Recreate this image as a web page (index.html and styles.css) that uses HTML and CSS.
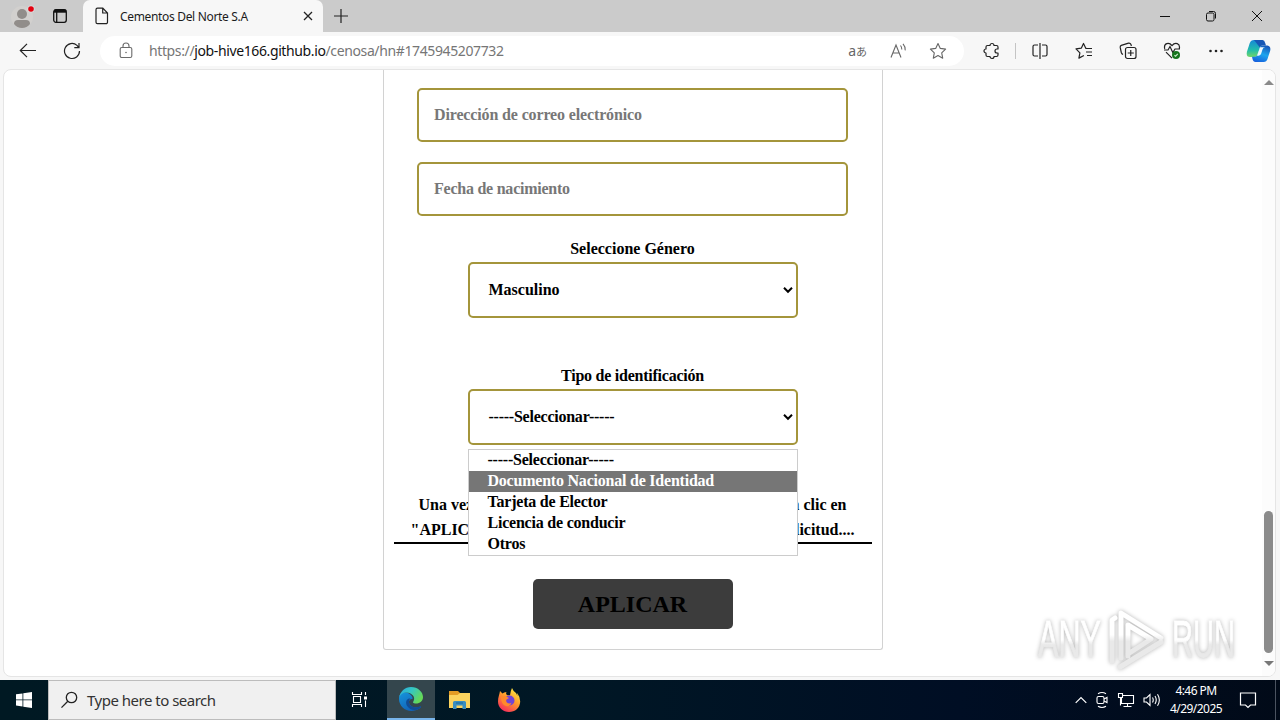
FILE: index.html
```html
<!DOCTYPE html>
<html lang="es">
<head>
<meta charset="utf-8">
<title>Cementos Del Norte S.A</title>
<link rel="stylesheet" href="styles.css">
</head>
<body>
<div class="desktop">
  <header class="tabstrip">
    <div class="strip-left">
      <svg class="profile" width="24" height="28" viewBox="0 0 24 28"><circle cx="11" cy="14" r="11" fill="#d2d0ce"/><circle cx="11" cy="11" r="5" fill="#918d8a"/><path d="M3 21q0-4 4-4h8q4 0 4 4-3 4-8 4t-8-4z" fill="#918d8a"/><circle cx="20" cy="6" r="3.600" fill="#ddd"/><circle cx="20" cy="6" r="2.800" fill="#e3000f"/></svg>
      <svg class="workspaces" width="16" height="16" viewBox="0 0 16 16" fill="none" stroke="#111" stroke-width="1.300"><rect x="1.700" y="1.700" width="12.600" height="12.600" rx="2.200"/><path d="M2 3.200h12" stroke-width="3"/><path d="M4.700 3v11"/></svg>
    </div>
    <div class="tab">
      <svg class="doc" width="14" height="18" viewBox="0 0 14 18" fill="none" stroke="#222" stroke-width="1.200"><path d="M2.500 1.200h5.300L12.500 6v9.200a1.500 1.500 0 0 1-1.500 1.500H2.500A1.500 1.500 0 0 1 1 15.200V2.700a1.500 1.500 0 0 1 1.500-1.500zM7.700 1.500V6h4.600"/></svg>
      <span class="tab-title">Cementos Del Norte S.A</span>
      <svg width="10" height="10" viewBox="0 0 10 10" stroke="#222" stroke-width="1.300"><path d="M1 1l8 8M9 1L1 9"/></svg>
    </div>
    <svg class="plus" width="14" height="14" viewBox="0 0 14 14" stroke="#222" stroke-width="1.200"><path d="M7 0v14M0 7h14"/></svg>
    <div class="window-buttons">
      <svg width="12" height="12" viewBox="0 0 12 12" fill="none" stroke="#111"><path d="M1 6.500h10"/></svg>
      <svg width="12" height="12" viewBox="0 0 12 12" fill="none" stroke="#111"><rect x="1.500" y="3" width="7.500" height="8" rx="1.500"/><path d="M4 1.500h4.500a2 2 0 0 1 2 2V8.500"/></svg>
      <svg width="12" height="12" viewBox="0 0 12 12" stroke="#111"><path d="M1 1l10 10M11 1L1 11"/></svg>
    </div>
  </header>

  <nav class="toolbar">
    <div class="nav-buttons">
      <svg width="18" height="16" viewBox="0 0 18 16" fill="none" stroke="#222" stroke-width="1.200"><path d="M17 8.500H1.500M8 1.800L1.300 8.500 8 15.200"/></svg>
      <svg width="18" height="18" viewBox="0 0 18 18" fill="none" stroke="#222" stroke-width="1.200"><path d="M16.500 9A7.500 7.500 0 1 1 14 3.400L15.800 5.500M16 1v4.700h-4.700"/></svg>
    </div>
    <div class="address">
      <svg class="lock" width="14" height="17" viewBox="0 0 14 17" fill="none" stroke="#6b6b6b" stroke-width="1.100"><rect x="1.200" y="5.500" width="11.600" height="10" rx="1.600"/><path d="M4 5.500V4a3 3 0 0 1 6 0v1.500"/><circle cx="7" cy="10.500" r=".8" fill="#6b6b6b" stroke="none"/></svg>
      <span class="url">https://<b>job-hive166.github.io</b>/cenosa/hn#1745945207732</span>
      <span class="translate">a<i>あ</i></span>
      <svg class="read" width="17" height="16" viewBox="0 0 17 16" fill="none" stroke="#666" stroke-width="1.100"><path d="M1 14.500L6 2l5 12.500M2.800 10h6.400M10.500 2.500q1.500 1.800 1.300 4M13 .8q2.700 3 2.200 6.500"/></svg>
      <svg class="star" width="18" height="18" viewBox="0 0 18 18" fill="none" stroke="#666" stroke-width="1.100" stroke-linejoin="round"><path d="M9 1.500l2.300 4.900 5.300.7-3.900 3.700 1 5.400L9 13.600l-4.700 2.600 1-5.400L1.400 7.100l5.300-.7z"/></svg>
    </div>
    <div class="tools">
      <svg width="18" height="18" viewBox="0 0 18 18" fill="none" stroke="#222" stroke-width="1.200" stroke-linejoin="round"><path d="M5.500 3.500H8a2 2 0 1 1 4 0h2.500Q16 3.500 16 5v2h-1a2 2 0 1 0 0 4h1v2q0 1.500-1.500 1.500H12a2 2 0 1 1-4 0H5.500Q4 14.500 4 13v-2a2 2 0 1 1 0-4V5q0-1.500 1.500-1.500z"/></svg>
      <span class="divider"></span>
      <svg width="18" height="18" viewBox="0 0 18 18" fill="none" stroke="#222" stroke-width="1.200"><path d="M7 3H3.500Q2 3 2 4.500v8Q2 14 3.500 14H7M11 3h3.500Q16 3 16 4.500v8q0 1.500-1.500 1.500H11M9 1v16"/></svg>
      <svg width="18" height="18" viewBox="0 0 18 18" fill="none" stroke="#222" stroke-width="1.200" stroke-linejoin="round"><path d="M11.500 6.400h-.6L8.500 1.500 6.400 6.100 1 6.900l3.900 3.900-1 5.300 5-2.600M11 6.500h6M11 10h6M12 13.500h5"/></svg>
      <svg width="18" height="18" viewBox="0 0 18 18" fill="none" stroke="#222" stroke-width="1.200"><path d="M4 12.500Q2.700 12 2.300 10.500L1.200 5.400Q1 4 2.300 3.400L9.500 1.200Q11.300.9 12 2.600l.4 1.400"/><rect x="6.500" y="5.500" width="10.500" height="11" rx="2"/><path d="M11.750 8v6M8.700 11h6.100"/></svg>
      <svg width="18" height="18" viewBox="0 0 18 18" fill="none" stroke="#222" stroke-width="1.200"><path d="M1.700 6.800C.5 1 6-.2 9 3.600 12-.2 17.500 1 16.300 6.800M1 8h4l2-3.500 2.800 6L12 7h5M3 10.200l6 6"/><circle cx="13" cy="13" r="4" fill="#16751d" stroke="none"/><path d="M11.400 13.200l1.200 1 2.200-2.300" stroke="#c8eac8"/></svg>
      <svg width="18" height="18" viewBox="0 0 18 18" fill="#222"><circle cx="3.500" cy="9" r="1.300"/><circle cx="9" cy="9" r="1.300"/><circle cx="14.500" cy="9" r="1.300"/></svg>
      <svg class="copilot" width="25" height="24" viewBox="0 0 25 24"><defs><linearGradient id="ca" x2="0" y2="1"><stop stop-color="#1688d8"/><stop offset=".6" stop-color="#22bdaa"/><stop offset="1" stop-color="#72d668"/></linearGradient><linearGradient id="cb" x1=".7" x2=".3" y2="1"><stop stop-color="#1758ba"/><stop offset=".5" stop-color="#1ba5ee"/><stop offset="1" stop-color="#1761dd"/></linearGradient></defs><path d="M8 1h8.500l-2 6-3 9q-.8 2-3 2H4Q-.3 18 1 12.500L3.800 4Q4.800 1 8 1z" fill="url(#ca)"/><path d="M8 1h8.500q2 0 2.700 3l.8 2.500h-3.500q-2 0-2.600 2z" fill="#1757b5"/><path d="M20 6.500h1.500q3.800.8 2.600 5.500l-2.600 8q-1 3-3.800 3H9.500q-2.300 0-3-3L6 17.800h2.500q2.300 0 3-2l2.400-7.300q.6-2 2.600-2z" fill="url(#cb)"/><path d="M14 8.200l-3 8.500q3.500 0 4.200-2.300l1.300-4q.7-2.200 2.800-2.200z" fill="#eef8fc"/></svg>
    </div>
  </nav>

  <main class="viewport">
    <form class="card">
      <input class="field mail" type="text" placeholder="Dirección de correo electrónico">
      <input class="field birth" type="text" placeholder="Fecha de nacimiento">
      <div class="group">
        <label>Seleccione Género</label>
        <div class="select"><span>Masculino</span><svg width="10" height="8" viewBox="0 0 10 8" fill="none" stroke="#000" stroke-width="2"><path d="M1 1.800l4 4 4-4"/></svg></div>
      </div>
      <div class="group id-group">
        <label>Tipo de identificación</label>
        <div class="select"><span>-----Seleccionar-----</span><svg width="10" height="8" viewBox="0 0 10 8" fill="none" stroke="#000" stroke-width="2"><path d="M1 1.800l4 4 4-4"/></svg></div>
        <ul class="options">
          <li>-----Seleccionar-----</li>
          <li class="active">Documento Nacional de Identidad</li>
          <li>Tarjeta de Elector</li>
          <li>Licencia de conducir</li>
          <li>Otros</li>
        </ul>
      </div>
      <div class="notice">
        <p class="first"><span>Una vez</span><span>en clic en</span></p>
        <p><span>"APLICAR"</span><span>solicitud....</span></p>
      </div>
      <button class="apply" type="button">APLICAR</button>
    </form>
    <div class="scrollbar"><i class="up"></i><i class="thumb"></i><i class="down"></i></div>
    <div class="watermark">
      <div class="word"><span class="any">ANY</span></div>
      <svg width="60" height="64" viewBox="0 0 60 64" fill="none" stroke-width="5" stroke-linejoin="round" stroke-linecap="round"><defs><linearGradient id="wm" gradientUnits="userSpaceOnUse" x1="0" y1="0" x2="0" y2="64"><stop offset=".42" stop-color="#fff"/><stop offset=".52" stop-color="#e9e9e9"/></linearGradient></defs><g stroke="url(#wm)"><path d="M14 50V5L54 30M54 34L13 59M21 48V17L44 31 21 46M5 53V12l3-2"/></g></svg>
      <div class="word"><span class="run">RUN</span></div>
    </div>
  </main>

  <footer class="taskbar">
    <div class="start"><svg width="16" height="16" viewBox="0 0 16 16" fill="#fff"><path d="M0 2.300L6.500 1.400v6.100H0zM7.300 1.300L16 0v7.500H7.300zM0 8.300h6.500v6.200L0 13.600zM7.300 8.300H16V16l-8.700-1.300z"/></svg></div>
    <div class="search"><svg width="18" height="18" viewBox="0 0 18 18" fill="none" stroke="#222" stroke-width="1.300"><circle cx="10.500" cy="6.500" r="5.200"/><path d="M6.800 10.300L.5 16.600"/></svg><span>Type here to search</span></div>
    <div class="app"><svg width="18" height="18" viewBox="0 0 18 18" fill="none" stroke="#fff" stroke-width="1.100"><path d="M1.500 1v2.500h9V1M1.500 16v-2.500h9V16M2.500 5.500h7v6h-7zM14.500 1v3M14.500 9.500V16"/><path d="M13 5.500h3v3h-3z" fill="#fff" stroke="none"/></svg></div>
    <div class="app current"><svg width="24" height="24" viewBox="0 0 24 24"><defs><linearGradient id="ea" x2="1" y2=".5"><stop stop-color="#2aa7dd"/><stop offset=".5" stop-color="#34c6c5"/><stop offset="1" stop-color="#65d957"/></linearGradient><linearGradient id="eb" x2=".6" y2="1"><stop stop-color="#1695dd"/><stop offset="1" stop-color="#1260b4"/></linearGradient></defs><path d="M0 12C0 5 6 4 10 6.500c3 2 4 4 3.500 5.500-2-.5-3.500 1-3.500 3 0 3.500 4 6 8.500 5.200 1.500-.3 2.800-.9 3.500-.7.800.5-3.500 4.500-9.500 4.500C5.500 24 0 18.500 0 12z" fill="url(#eb)"/><path d="M10.500 11.500C7 12 6 16 8.500 19.500c3 4 8 4 11 2.500 1.500-.8 2.700-2 2.500-2.500-.7-.2-2 .5-3.500.7C14 21 10 18.500 10 15c0-1.500.5-2.700 1.500-3.200z" fill="#124c94"/><path d="M0 11C1 4.500 6 0 12 0c7 0 12 5 12 10 0 4-3 6.500-7 6.500-3 0-3.500-1.200-2.500-2.300C17 10 12.500 5.500 7.500 5.500 4 5.500 1 7.500 0 11z" fill="url(#ea)"/></svg></div>
    <div class="app"><svg width="22" height="20" viewBox="0 0 22 20"><path d="M0 1h9l2 2h10v15H0z" fill="#e39c25"/><path d="M0 5h8.500L11 3h10v15H0z" fill="#fbd35e"/><path d="M4 19v-6.500Q4 11 5.500 11h10q1.500 0 1.500 1.500V19h-3.500v-3.500h-6V19z" fill="#3a8ec0"/><path d="M7 13h7" stroke="#1f6fa5" stroke-width="1.300"/></svg></div>
    <div class="app"><svg width="24" height="24" viewBox="0 0 24 24"><defs><linearGradient id="fa" x1=".8" x2=".2" y2="1"><stop stop-color="#fff044"/><stop offset=".45" stop-color="#ff9b2b"/><stop offset="1" stop-color="#f5245f"/></linearGradient></defs><path d="M15 0q1 3 4 5 1 1.500 1.200 3V5q3 4 3 8.500C23 20 18 24 12 24S1 19.500 1 13.500C1 9 2.500 6.500 3 3l2.500 2.500Q7 4 9.500 4q-1 2 .5 3 1 .5 3 .2Q13.500 3 15 0z" fill="url(#fa)"/><circle cx="12.500" cy="12.500" r="5" fill="#7144d6"/><path d="M4 9q4-2 8 1l-2.500 1.500q-1 2 1 3.500 2 1 4-.3-1.500 4.300-5.500 3.300-5-1.500-5-9z" fill="#ff8a2b"/></svg></div>
    <div class="tray">
      <svg width="12" height="8" viewBox="0 0 12 8" fill="none" stroke="#fff" stroke-width="1.200"><path d="M.7 6.800L6 1.500l5.300 5.300"/></svg>
      <svg width="14" height="18" viewBox="0 0 14 18" fill="none" stroke="#fff" stroke-width="1.100"><rect x="2" y="5.500" width="7" height="7" rx="1.500"/><path d="M9 8l3-1.500v5L9 10M3 2.700q4-2.500 8 0M3 15.300q4 2.500 8 0"/></svg>
      <svg width="18" height="16" viewBox="0 0 18 16" fill="none" stroke="#fff" stroke-width="1.100"><path d="M5 3.500h11.500v8H4.500V6M1.500 1.500h4v4h-4zM3.500 5.500v8M10.500 11.500v3M6.500 14.500h8"/></svg>
      <svg width="18" height="14" viewBox="0 0 18 14" fill="none" stroke="#fff" stroke-width="1.100"><path d="M1 5h2.500L7 1.500v11L3.500 9H1zM9.500 4.500q1.500 2.500 0 5M12 3q2.500 4 0 8M14.500 1.200q3.700 5.800 0 11.600"/></svg>
      <div class="clock"><span>4:46 PM</span><span>4/29/2025</span></div>
      <svg class="note" width="18" height="18" viewBox="0 0 18 18" fill="none" stroke="#fff" stroke-width="1.200"><path d="M1.500 2h15v12h-5L9 16.500 6.500 14h-5z"/></svg>
      <i class="peek"></i>
    </div>
  </footer>
</div>
</body>
</html>
```
FILE: styles.css
```css
* { box-sizing: border-box; }
body { margin: 0; }
svg { display: block; flex: none; }
.desktop { width: 1280px; height: 720px; overflow: hidden; display: flex; flex-direction: column; background: #f7f7f7; font-family: "Noto Sans", sans-serif; }

.tabstrip { height: 32px; flex: none; display: flex; align-items: center; background: #cbcbcb; }
.strip-left { width: 83px; height: 32px; flex: none; display: flex; align-items: center; gap: 17px; padding-left: 11px; }
.profile { margin-top: 1px; }
.tab { width: 240px; height: 32px; flex: none; display: flex; align-items: center; padding: 0 10px 0 12px; background: #f7f7f7; border-radius: 7px 7px 0 0; }
.tab-title { flex: 1; margin-left: 11px; font-size: 12px; letter-spacing: -0.33px; color: #1c1c1c; white-space: nowrap; }
.plus { margin-left: 11px; }
.window-buttons { display: flex; gap: 34px; margin-left: auto; padding-right: 17px; }

.toolbar { height: 37px; flex: none; display: flex; align-items: center; }
.nav-buttons { width: 100px; flex: none; display: flex; gap: 26px; padding-left: 19px; }
.address { width: 864px; height: 30px; flex: none; display: flex; align-items: center; padding: 0 17px 0 19px; background: #fff; border-radius: 15px; }
.url { flex: 1; margin-left: 16px; font-size: 14px; letter-spacing: -0.38px; color: #767676; white-space: nowrap; }
.url b { font-weight: 400; color: #111; }
.translate { margin-right: 23px; font-size: 14px; line-height: 20px; color: #666; }
.translate i { font: 11px "Noto Sans CJK JP", sans-serif; }
.read { margin-right: 22px; }
.tools { display: flex; align-items: center; flex: 1; padding-left: 18px; gap: 26px; }
.divider { width: 1px; height: 16px; margin: 0 -11px; background: #c4c4c4; }
.copilot { margin-left: -5px; }

.viewport { position: relative; height: 608px; margin: 0 4px 0 3px; flex: none; display: flex; justify-content: center; background: #fff; border: 1px solid #e5e5e5; border-radius: 8px; overflow: hidden; }
.card { width: 500px; height: 580px; margin-right: 14px; display: flex; flex-direction: column; align-items: center; padding-top: 18px; border: 1px solid #d2d2d2; border-top: 0; border-radius: 0 0 3px 3px; font: bold 16px "Liberation Serif", serif; color: #000; }
.field { width: 431px; height: 54px; flex: none; margin: 0 0 20px; padding: 0 15px; border: 2px solid #a4953b; border-radius: 5px; background: #fff; font: inherit; }
.field::placeholder { color: #777; opacity: 1; }
.mail { letter-spacing: -0.14px; }
.birth { letter-spacing: -0.24px; }
.group { position: relative; width: 330px; display: flex; flex-direction: column; align-items: center; margin-top: 4px; }
.group label { height: 22px; line-height: 18px; }
.select { width: 330px; height: 56px; display: flex; align-items: center; justify-content: space-between; padding: 0 3px 0 19px; border: 2px solid #a4953b; border-radius: 5px; background: #fff; }
.id-group { margin-top: 49px; z-index: 2; letter-spacing: -0.24px; }
.options { position: absolute; top: 82px; left: 0; width: 330px; height: 107px; margin: 0; padding: 0; list-style: none; background: #fff; border: 1px solid #ccc; letter-spacing: -0.22px; }
.options li { height: 21px; line-height: 20px; padding-left: 19px; white-space: nowrap; }
.options .active { background: #767676; color: #fff; }
.notice { width: 478px; height: 52px; margin-top: 47px; flex: none; border-bottom: 2px solid #000; }
.notice p { display: flex; justify-content: space-between; margin: 0; padding: 0 17px; line-height: 25px; white-space: nowrap; }
.notice .first { padding: 0 25px; }
.apply { width: 200px; height: 50px; margin-top: 35px; flex: none; border: 0; border-radius: 5px; background: #3c3c3c; font: bold 24px "Liberation Serif", serif; color: #000; }

.scrollbar { position: absolute; top: 0; right: 0; width: 13px; height: 606px; background: #fcfcfc; display: flex; flex-direction: column; align-items: center; }
.up, .down { width: 0; height: 0; border: 5px solid transparent; }
.up { margin-top: 5px; border-bottom: 5px solid #8a8a8a; }
.thumb { width: 9px; height: 142px; margin-top: 426px; border-radius: 5px; background: #8b8b8b; }
.down { margin-top: 8px; border-top: 5px solid #777; }

.watermark { position: absolute; left: 1034px; top: 538px; display: flex; align-items: center; gap: 5px; filter: drop-shadow(0 0 2px #b5b5b5); }
.word { width: 64px; }
.any, .run { display: block; width: 116px; font: 51px/60px "Liberation Sans", sans-serif; white-space: nowrap; transform: scaleX(.6); transform-origin: 0 50%; color: transparent; -webkit-text-stroke: 1px transparent; background: linear-gradient(#fff 50%, #e9e9e9 58%); -webkit-background-clip: text; background-clip: text; }
.run { transform: scaleX(.57); }

.taskbar { height: 40px; margin-top: 3px; flex: none; display: flex; align-items: center; background: linear-gradient(90deg, #001923, #001725 45%, #000e24 75%, #010a18); }
.start { width: 48px; flex: none; display: flex; justify-content: center; }
.search { width: 288px; height: 40px; flex: none; display: flex; align-items: center; gap: 8px; padding-left: 12px; background: #f0f0f0; border: 1px solid #bcbcbc; font-size: 15px; letter-spacing: -0.5px; color: #333; }
.app { width: 49px; height: 40px; flex: none; display: flex; align-items: center; justify-content: center; }
.app:nth-child(3) { width: 51px; padding-right: 4px; }
.current { width: 48px; background: #34464d; border-bottom: 2px solid #78b5eb; }
.tray { margin-left: auto; height: 40px; display: flex; align-items: center; gap: 8px; }
.clock { width: 56px; margin-left: -1px; display: flex; flex-direction: column; align-items: center; font-size: 12px; line-height: 18px; letter-spacing: -0.55px; color: #fff; white-space: nowrap; }
.note { margin-left: 7px; }
.peek { width: 1px; height: 40px; margin: 0 4px 0 10px; background: #4b5360; }
```
